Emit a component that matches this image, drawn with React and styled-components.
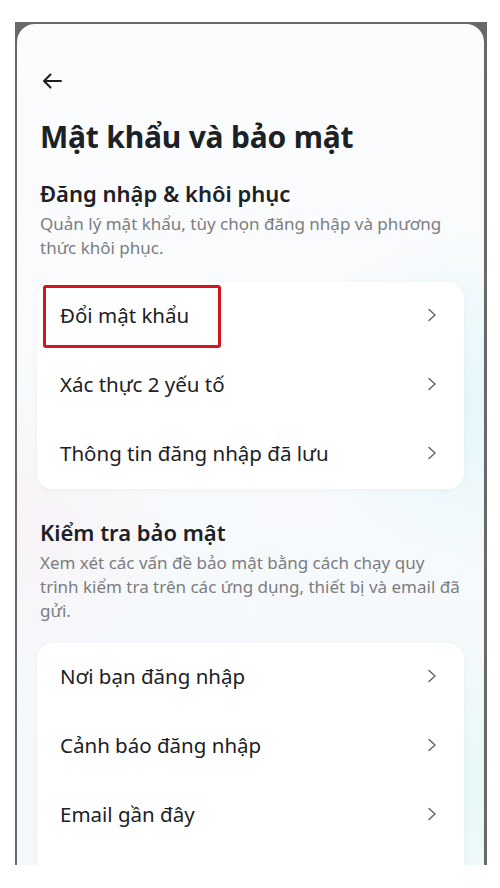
import React from "react";
import styled, { createGlobalStyle } from "styled-components";

const GlobalStyle = createGlobalStyle`
  html, body {
    margin: 0;
    padding: 0;
    background: #ffffff;
  }
  body {
    font-family: "Noto Sans", "Open Sans", sans-serif;
    -webkit-font-smoothing: antialiased;
  }
`;

const Page = styled.div`
  width: 500px;
  height: 888px;
  overflow: hidden;
  padding: 22px 13px 0 15px;
  box-sizing: border-box;
`;

const Frame = styled.div`
  height: 843px;
  background: #686868;
  padding: 2px 3px 0 2px;
  box-sizing: border-box;
`;

const Screen = styled.div`
  height: 100%;
  border-radius: 18px 18px 0 0;
  overflow: hidden;
  padding: 45px 21px 0 23px;
  box-sizing: border-box;
  background:
    radial-gradient(ellipse 60% 30% at 100% 45%, rgba(220, 246, 250, 0.7), transparent 70%),
    radial-gradient(ellipse 50% 25% at 0% 60%, rgba(250, 232, 240, 0.4), transparent 70%),
    radial-gradient(ellipse 60% 25% at 100% 90%, rgba(225, 248, 245, 0.7), transparent 70%),
    linear-gradient(180deg, #fbfcfd 0%, #f4f8fb 100%);
`;

const BackButton = styled.button`
  display: flex;
  width: 24px;
  height: 24px;
  padding: 0;
  border: none;
  background: none;
  align-items: center;
  justify-content: center;
`;

const Title = styled.h1`
  margin: 26px 0 0;
  font-size: 30px;
  line-height: 36px;
  font-weight: 700;
  color: #1c2126;
  letter-spacing: -0.2px;
`;

const Section = styled.section`
  margin-top: ${(p) => p.$gap}px;
`;

const SectionTitle = styled.h2`
  margin: 0;
  font-size: 22px;
  line-height: 28px;
  font-weight: 600;
  color: #1c2126;
`;

const SectionDesc = styled.p`
  margin: 5px 0 0;
  font-size: 17px;
  line-height: 24px;
  color: #7b7d80;
`;

const Card = styled.div`
  margin: ${(p) => p.$top}px -1px 0 -3px;
  padding-bottom: ${(p) => p.$tail || 0}px;
  background: #ffffff;
  border-radius: 16px;
  box-shadow: 0 1px 6px rgba(30, 60, 90, 0.04);
`;

const Row = styled.div`
  position: relative;
  height: 69px;
  display: flex;
  align-items: center;
  justify-content: space-between;
  padding: 0 26px 4px 23px;
  box-sizing: border-box;
`;

const RowLabel = styled.span`
  font-size: 20.5px;
  color: #1c2126;
`;

const Highlight = styled.span`
  position: absolute;
  left: 6px;
  top: 3px;
  width: 178px;
  height: 63px;
  border: 3px solid #d3151f;
  border-radius: 3px;
  box-sizing: border-box;
  pointer-events: none;
`;

const Chevron = () => (
  <svg width="12" height="16" viewBox="0 0 12 16" fill="none">
    <path d="M3 2.5 L9 8 L3 13.5" stroke="#636568" strokeWidth="1.5" strokeLinecap="round" strokeLinejoin="round" />
  </svg>
);

const loginRows = [
  { label: "Đổi mật khẩu", marked: true },
  { label: "Xác thực 2 yếu tố" },
  { label: "Thông tin đăng nhập đã lưu" },
];

const checkRows = [
  { label: "Nơi bạn đăng nhập" },
  { label: "Cảnh báo đăng nhập" },
  { label: "Email gần đây" },
];

const MenuCard = ({ rows, top, tail }) => (
  <Card $top={top} $tail={tail}>
    {rows.map((row) => (
      <Row key={row.label}>
        {row.marked && <Highlight />}
        <RowLabel>{row.label}</RowLabel>
        <Chevron />
      </Row>
    ))}
  </Card>
);

const App = () => (
  <>
    <GlobalStyle />
    <Page>
      <Frame>
        <Screen>
          <BackButton aria-label="Quay lại">
            <svg width="24" height="24" viewBox="0 0 24 24" fill="none">
              <path d="M21 12 H4 M10.5 5.5 L4 12 L10.5 18.5" stroke="#1c1e21" strokeWidth="2" strokeLinecap="round" strokeLinejoin="round" />
            </svg>
          </BackButton>
          <Title>Mật khẩu và bảo mật</Title>

          <Section $gap={24}>
            <SectionTitle>Đăng nhập &amp; khôi phục</SectionTitle>
            <SectionDesc>
              Quản lý mật khẩu, tùy chọn đăng nhập và phương thức khôi phục.
            </SectionDesc>
            <MenuCard rows={loginRows} top={22} />
          </Section>

          <Section $gap={29}>
            <SectionTitle>Kiểm tra bảo mật</SectionTitle>
            <SectionDesc>
              Xem xét các vấn đề bảo mật bằng cách chạy quy trình kiểm tra trên các ứng dụng, thiết bị và email đã gửi.
            </SectionDesc>
            <MenuCard rows={checkRows} top={20} tail={40} />
          </Section>
        </Screen>
      </Frame>
    </Page>
  </>
);

export default App;
